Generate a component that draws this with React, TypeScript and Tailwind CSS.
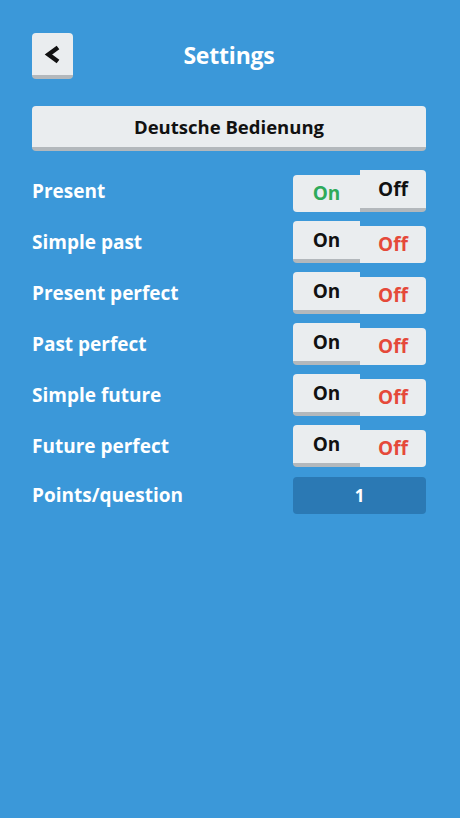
import React from 'react';

type Row = { label: string; on: boolean };

const rows: Row[] = [
  { label: 'Present', on: true },
  { label: 'Simple past', on: false },
  { label: 'Present perfect', on: false },
  { label: 'Past perfect', on: false },
  { label: 'Simple future', on: false },
  { label: 'Future perfect', on: false },
];

const Toggle: React.FC<{ on: boolean }> = ({ on }) => {
  // the active half sits pressed down, the other one stays raised
  const raised = 'h-[42px] border-b-4 border-[#b3b8bc]';
  const pressed = 'mt-[5px] h-[37px]';
  return (
    <div className="flex h-[42px] w-[133px] items-start">
      <div
        className={`flex w-[67px] items-center justify-center rounded-l-[4px] bg-[#eaedef] text-[19px] font-bold ${
          on ? `${pressed} text-[#2eaa5a]` : `${raised} text-[#111]`
        }`}
      >
        On
      </div>
      <div
        className={`flex w-[66px] items-center justify-center rounded-r-[4px] bg-[#eaedef] text-[19px] font-bold ${
          on ? `${raised} text-[#111]` : `${pressed} text-[#e5493a]`
        }`}
      >
        Off
      </div>
    </div>
  );
};

export default function App() {
  return (
    <div
      className="h-[818px] w-[460px] bg-[#3b98d9] pl-8 pr-[34px] pt-[33px]"
      style={{ fontFamily: '"Open Sans", "Liberation Sans", sans-serif' }}
    >
      {/* Header */}
      <div className="flex items-start">
        <button className="flex h-[46px] w-[41px] items-center justify-center rounded-[4px] border-b-4 border-[#b3b8bc] bg-[#eaedef]">
          <svg width="17" height="19" viewBox="0 0 17 19">
            <path d="M14 2.5 L4.5 9.5 L14 16.5" fill="none" stroke="#111" strokeWidth="4.5" />
          </svg>
        </button>
        <div className="flex h-[46px] flex-1 items-center justify-center pb-[2px] text-[23px] font-bold tracking-[-0.2px] text-white">
          Settings
        </div>
        <div className="w-[41px]" />
      </div>

      {/* Language button */}
      <button className="mt-[27px] flex h-[45px] w-full items-center justify-center rounded-[4px] border-b-4 border-[#b3b8bc] bg-[#eaedef] text-[18.5px] font-bold text-[#111]">
        Deutsche Bedienung
      </button>

      {/* Tense toggles */}
      <div className="mt-[19px] flex flex-col gap-[9px]">
        {rows.map((r) => (
          <div key={r.label} className="flex items-center justify-between">
            <span className="text-[19px] font-bold text-white">{r.label}</span>
            <Toggle on={r.on} />
          </div>
        ))}
        <div className="flex items-center justify-between">
          <span className="text-[19px] font-bold text-white">Points/question</span>
          <div className="mt-[1px] flex h-[37px] w-[133px] items-center justify-center rounded-[4px] bg-[#2b79b4] text-[17px] font-bold text-white">
            1
          </div>
        </div>
      </div>
    </div>
  );
}
